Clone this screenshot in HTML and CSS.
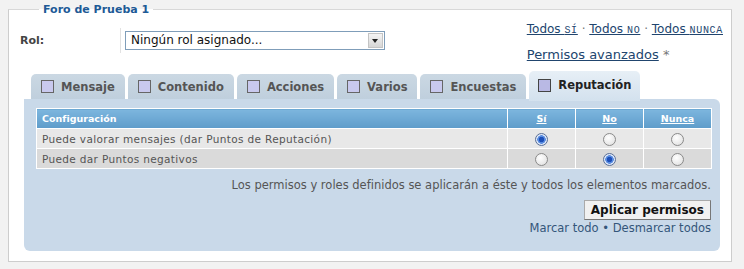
FILE: index.html
```html
<!DOCTYPE html>
<html lang="es">
<head>
    <meta charset="UTF-8">
    <title>Permisos del foro</title>
    <link rel="stylesheet" href="styles.css">
</head>
<body>
    <fieldset class="forum">
        <legend>Foro de Prueba 1</legend>

        <div class="top">
            <div class="role">
                <label class="role-label">Rol:</label>
                <div class="role-cell">
                    <div class="select">
                        <span>Ningún rol asignado...</span>
                        <span class="arrow"></span>
                    </div>
                </div>
            </div>
            <div class="quick">
                <div class="quick-line">
                    <a href="#">Todos <span class="sc">sí</span></a> &middot;
                    <a href="#">Todos <span class="sc">no</span></a> &middot;
                    <a href="#">Todos <span class="sc">nunca</span></a>
                </div>
                <div class="quick-line adv"><a href="#">Permisos avanzados</a> <span class="star">*</span></div>
            </div>
        </div>

        <ul class="tabs">
            <li class="tab"><span class="box"></span>Mensaje</li>
            <li class="tab"><span class="box"></span>Contenido</li>
            <li class="tab"><span class="box"></span>Acciones</li>
            <li class="tab"><span class="box"></span>Varios</li>
            <li class="tab"><span class="box"></span>Encuestas</li>
            <li class="tab active"><span class="box"></span>Reputación</li>
        </ul>

        <div class="panel">
            <table class="perms">
                <thead>
                    <tr>
                        <th class="name">Configuración</th>
                        <th><a href="#">Sí</a></th>
                        <th><a href="#">No</a></th>
                        <th><a href="#">Nunca</a></th>
                    </tr>
                </thead>
                <tbody>
                    <tr class="row1">
                        <td class="name">Puede valorar mensajes (dar Puntos de Reputación)</td>
                        <td><input type="radio" name="rep" checked></td>
                        <td><input type="radio" name="rep"></td>
                        <td><input type="radio" name="rep"></td>
                    </tr>
                    <tr class="row2">
                        <td class="name">Puede dar Puntos negativos</td>
                        <td><input type="radio" name="neg"></td>
                        <td><input type="radio" name="neg" checked></td>
                        <td><input type="radio" name="neg"></td>
                    </tr>
                </tbody>
            </table>

            <p class="note">Los permisos y roles definidos se aplicarán a éste y todos los elementos marcados.</p>

            <div class="actions">
                <button class="apply">Aplicar permisos</button>
                <div class="marks"><a href="#">Marcar todo</a> &bull; <a href="#">Desmarcar todos</a></div>
            </div>
        </div>
    </fieldset>
</body>
</html>
```

FILE: styles.css
```css
* {
    box-sizing: border-box;
}

body {
    margin: 0;
    padding: 3px 0 0;
    background: #f2f2f2;
    font-family: "DejaVu Sans", Verdana, sans-serif;
    font-size: 11px;
    color: #333;
}

a {
    color: #21456e;
}

.forum {
    margin: 0 0 0 8px;
    width: 724px;
    padding: 0 10px 10px 11px;
    background: #fff;
    border: 1px solid #cdcdcd;
    border-top-color: #d8d8d8;
}

.forum legend {
    margin-left: 19px;
    padding: 0 4px;
    color: #1e5a96;
    font-weight: bold;
    font-size: 11px;
}

/* role + quick links */

.top {
    display: flex;
    justify-content: space-between;
    height: 58px;
}

.role {
    display: flex;
    align-items: center;
    height: 40px;
    padding-top: 8px;
}

.role-label {
    width: 100px;
    font-weight: bold;
    color: #444;
}

.role-cell {
    border-left: 1px solid #e2e2e2;
    padding: 3px 0 3px 4px;
}

.select {
    display: flex;
    align-items: center;
    justify-content: space-between;
    width: 260px;
    height: 19px;
    border: 1px solid #7f9db9;
    padding-left: 5px;
    font-size: 12px;
    color: #111;
}

.arrow {
    width: 15px;
    height: 15px;
    margin-right: 1px;
    background: linear-gradient(#f4f4f4, #d6d6d6);
    border: 1px solid #c4c4c4;
    position: relative;
}

.arrow::after {
    content: "";
    position: absolute;
    left: 3px;
    top: 5px;
    border-left: 3.5px solid transparent;
    border-right: 3.5px solid transparent;
    border-top: 4px solid #222;
}

.quick {
    padding-top: 6px;
    margin-right: -2px;
    font-size: 12px;
    color: #777;
}

.quick-line {
    line-height: 15px;
}

.quick-line.adv {
    margin-top: 9px;
    font-size: 13px;
}

.sc {
    text-transform: uppercase;
    font-family: "Liberation Mono", monospace;
    font-size: 10px;
    letter-spacing: 0.7px;
}

.star {
    color: #777;
}

/* tabs */

.tabs {
    list-style: none;
    display: flex;
    align-items: flex-end;
    gap: 3px;
    margin: 0 0 0 11px;
    padding: 0;
    height: 25px;
}

.tab {
    display: flex;
    align-items: center;
    height: 25px;
    padding: 0 10px;
    background: linear-gradient(#cbd8e3, #bfcfdd);
    border-radius: 5px 5px 0 0;
    font-weight: bold;
    font-size: 11.5px;
    color: #555;
}

.tab .box {
    width: 13px;
    height: 13px;
    margin-right: 7px;
    border: 1px solid #666;
    background: #c9c9ee;
}

.tab.active {
    height: 30px;
    margin-bottom: -2px;
    padding: 0 9px 2px;
    background: linear-gradient(#e7eff6, #d3e1ee);
    color: #222;
    position: relative;
    z-index: 1;
}

.tab.active .box {
    background: #b9b9e4;
    border-color: #444;
}

/* panel */

.panel {
    margin: 0 0 0 4px;
    width: 696px;
    background: #c9d9e9;
    border-radius: 0 6px 6px 6px;
    padding: 9px 9px 16px 12px;
}

.perms {
    width: 676px;
    border-collapse: collapse;
    border: 1px solid #fff;
    font-size: 10.5px;
}

.perms th {
    height: 20px;
    background: linear-gradient(#7db6de, #5e9cca);
    color: #fff;
    font-size: 9.5px;
    border-left: 1px solid #fff;
    width: 68px;
}

.perms th a {
    color: #fff;
}

.perms th.name {
    text-align: left;
    padding-left: 5px;
    border-left: none;
    width: auto;
}

.perms td {
    height: 20px;
    text-align: center;
    border-left: 1px solid #fff;
    border-top: 1px solid #fff;
    padding: 0;
}

.perms td.name {
    text-align: left;
    padding-left: 5px;
    border-left: none;
    color: #555;
    letter-spacing: 0.35px;
}

.row1 td {
    background: #e8e8e8;
}

.row2 td {
    background: #dadada;
}

.perms input {
    appearance: none;
    width: 13px;
    height: 13px;
    margin: 3px 0 0;
    border: 1px solid #8a8a8a;
    border-radius: 50%;
    background: radial-gradient(circle at 40% 35%, #fff, #dcdcdc);
}

.perms input:checked {
    background: radial-gradient(circle, #1d4fb8 0 2.5px, #5b8de0 3px 4px, #dfe8f8 4.5px);
    border-color: #5a6f95;
}

.note {
    margin: 9px 0 0;
    text-align: right;
    color: #555;
    font-size: 11.5px;
}

.actions {
    display: flex;
    flex-direction: column;
    align-items: flex-end;
    margin-top: 8px;
}

.apply {
    height: 20px;
    padding: 0 6px;
    background: #f1f1f1;
    border: 1px solid #777;
    border-top-color: #aaa;
    border-left-color: #aaa;
    font-family: inherit;
    font-size: 12px;
    font-weight: bold;
    color: #111;
}

.marks {
    margin-top: 1px;
    color: #34567a;
    font-size: 11.5px;
}

.marks a {
    color: #34567a;
    text-decoration: none;
}
```
